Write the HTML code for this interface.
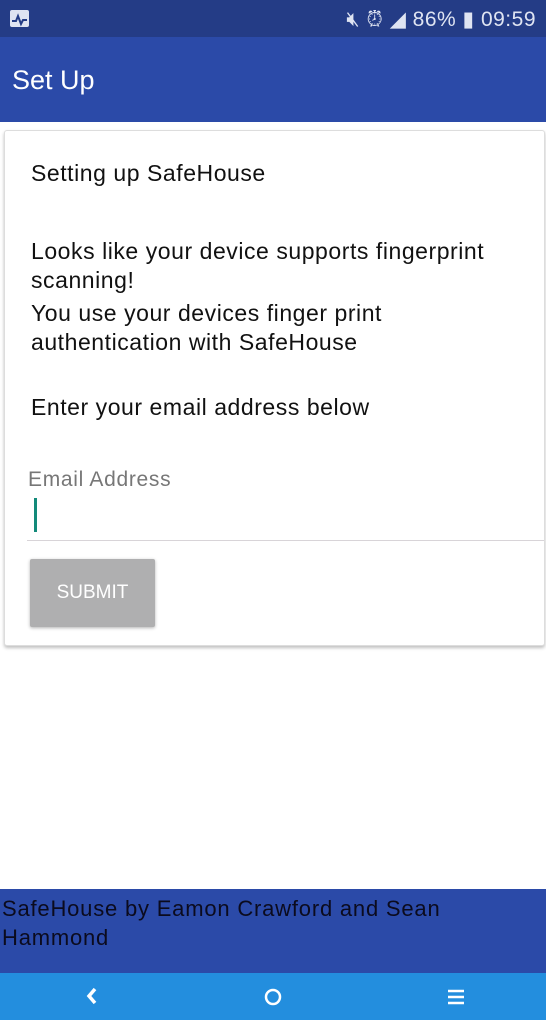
<!DOCTYPE html>
<html><head><style>
body{margin:0;width:546px;height:1020px;position:relative;background:#fff;font-family:"Liberation Sans",sans-serif;overflow:hidden}
.sb{position:absolute;top:0;left:0;width:546px;height:37px;background:#243c86;color:#dfe4f2;font-size:21px}
.ab{position:absolute;top:37px;left:0;width:546px;height:85px;background:#2b4aa8;color:#fff;font-size:27px}
.card{position:absolute;top:130px;left:4px;width:539px;height:514px;border:1px solid #ddd;border-radius:3px;box-shadow:0 2px 3px rgba(0,0,0,.25);background:#fff}
.t{position:absolute;left:31px;font-size:23px;color:#111;line-height:29px;letter-spacing:.55px;white-space:nowrap}
.ft{position:absolute;top:889px;left:0;width:546px;height:84px;background:#2b4aa8;font-size:22px;line-height:29px;color:#0b0b1e;letter-spacing:.8px}
.nav{position:absolute;top:973px;left:0;width:546px;height:47px;background:#238ede}
</style></head><body>
<div class="sb">
<div style="position:absolute;left:10px;top:10px;width:19px;height:17px;background:#dfe4f2;border-radius:2px"><svg width="19" height="17"><path d="M2 10h4l2-5 3 8 2-4h4" stroke="#243c86" stroke-width="2" fill="none"/></svg></div>
<span style="position:absolute;right:10px;top:7px;letter-spacing:.5px">🔇︎ ⏰︎ ◢ 86% ▮ 09:59</span>
</div>
<div class="ab"><span style="position:absolute;left:12px;top:28px">Set Up</span></div>
<div class="card">
<div class="t" style="top:28px;left:26px">Setting up SafeHouse</div>
<div class="t" style="top:106px;left:26px">Looks like your device supports fingerprint<br>scanning!</div>
<div class="t" style="top:168px;left:26px">You use your devices finger print<br>authentication with SafeHouse</div>
<div class="t" style="top:262px;left:26px">Enter your email address below</div>
<div style="position:absolute;left:23px;top:337px;font-size:21px;color:#777;letter-spacing:.7px">Email Address</div>
<div style="position:absolute;left:29px;top:367px;width:3px;height:34px;background:#138a7a"></div>
<div style="position:absolute;left:22px;top:409px;width:517px;height:1px;background:#d8d4d8"></div>
<div style="position:absolute;left:25px;top:428px;width:125px;height:68px;background:#afafb0;border-radius:2px;box-shadow:0 1px 3px rgba(0,0,0,.3);color:#fff;font-size:19px;text-align:center;line-height:68px">SUBMIT</div>
</div>
<div class="ft"><div style="padding:5px 0 0 2px">SafeHouse by Eamon Crawford and Sean<br>Hammond</div></div>
<div class="nav">
<svg style="position:absolute;left:84px;top:13px" width="16" height="20"><path d="M11 3L5 10l6 7" stroke="#fff" stroke-width="3.5" fill="none"/></svg>
<svg style="position:absolute;left:263px;top:14px" width="20" height="20"><circle cx="10" cy="10" r="7" stroke="#fff" stroke-width="2.5" fill="none"/></svg>
<svg style="position:absolute;left:447px;top:15px" width="20" height="18"><path d="M1 3h16M1 9h16M1 15h16" stroke="#fff" stroke-width="2.5"/></svg>
</div>
</body></html>
